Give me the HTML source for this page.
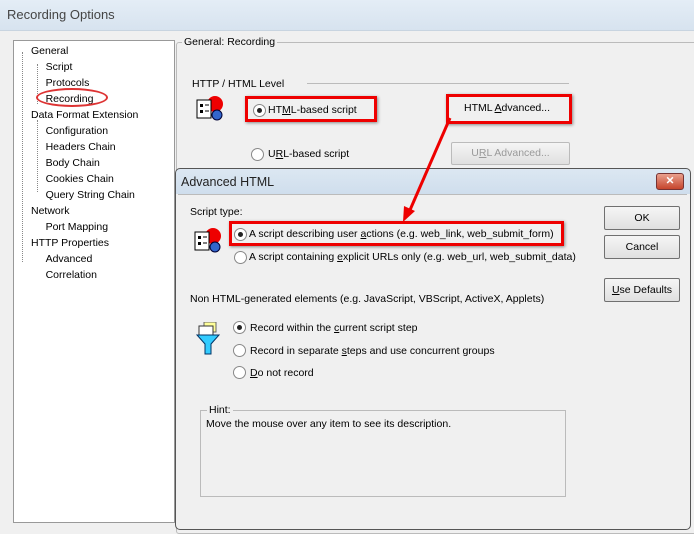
<!DOCTYPE html><html><head><style>
body{margin:0;width:694px;height:521px;overflow:hidden;background:#f0f0f0;font-family:"Liberation Sans",Tahoma,sans-serif;font-size:10.5px;color:#000;position:relative}
.a{position:absolute;white-space:nowrap}
.rad{position:absolute;width:11px;height:11px;border-radius:50%;border:1px solid #888;background:#fff}
.rad.on::after{content:"";position:absolute;left:3px;top:3px;width:5px;height:5px;border-radius:50%;background:#222}
.btn{position:absolute;border:1px solid #707070;background:linear-gradient(#f5f5f5,#e0e0e0);text-align:center;border-radius:2px}
.red{position:absolute;border:3px solid #e00;box-shadow:1px 1px 3px #888}
</style></head><body>
<div class="a" style="left:0;top:0;width:694px;height:30px;background:linear-gradient(#e4edf6,#d7e3ef);border-bottom:1px solid #c8d4e0"></div>
<div class="a" style="left:7px;top:7px;font-size:13px;color:#444">Recording Options</div>
<div class="a" style="left:13px;top:40px;width:160px;height:481px;background:#fff;border:1px solid #999"></div>
<div class="a" style="left:22px;top:52px;height:210px;border-left:1px dotted #888"></div>
<div class="a" style="left:37px;top:64px;height:40px;border-left:1px dotted #888"></div>
<div class="a" style="left:37px;top:120px;height:72px;border-left:1px dotted #888"></div>
<div class="a" style="left:31px;top:43px;line-height:16px">General<br>&nbsp;&nbsp;&nbsp;&nbsp;&nbsp;Script<br>&nbsp;&nbsp;&nbsp;&nbsp;&nbsp;Protocols<br>&nbsp;&nbsp;&nbsp;&nbsp;&nbsp;Recording<br>Data Format Extension<br>&nbsp;&nbsp;&nbsp;&nbsp;&nbsp;Configuration<br>&nbsp;&nbsp;&nbsp;&nbsp;&nbsp;Headers Chain<br>&nbsp;&nbsp;&nbsp;&nbsp;&nbsp;Body Chain<br>&nbsp;&nbsp;&nbsp;&nbsp;&nbsp;Cookies Chain<br>&nbsp;&nbsp;&nbsp;&nbsp;&nbsp;Query String Chain<br>Network<br>&nbsp;&nbsp;&nbsp;&nbsp;&nbsp;Port Mapping<br>HTTP Properties<br>&nbsp;&nbsp;&nbsp;&nbsp;&nbsp;Advanced<br>&nbsp;&nbsp;&nbsp;&nbsp;&nbsp;Correlation</div>
<div class="a" style="left:36px;top:88px;width:68px;height:15px;border:2px solid #d33;border-radius:50%"></div>
<div class="a" style="left:176px;top:42px;width:530px;height:490px;border:1px solid #bbb;border-radius:3px"></div>
<div class="a" style="left:182px;top:36px;background:#f0f0f0;padding:0 2px">General: Recording</div>
<div class="a" style="left:192px;top:78px">HTTP / HTML Level</div>
<div class="a" style="left:307px;top:83px;width:262px;border-top:1px solid #bbb"></div>
<svg class="a" style="left:195px;top:94px" width="32" height="32"><circle cx="20" cy="10" r="8" fill="#e00"/><rect x="2" y="6" width="14" height="18" fill="#fff" stroke="#000"/><rect x="5" y="10" width="3" height="3" fill="#000"/><rect x="5" y="16" width="3" height="3" fill="#000"/><line x1="10" y1="11" x2="14" y2="11" stroke="#000"/><line x1="10" y1="17" x2="14" y2="17" stroke="#000"/><circle cx="22" cy="21" r="5" fill="#36c" stroke="#003"/></svg>
<div class="red" style="left:245px;top:96px;width:126px;height:20px"></div>
<div class="rad on" style="left:253px;top:104px"></div>
<div class="a" style="left:268px;top:104px">HT<u>M</u>L-based script</div>
<div class="red" style="left:446px;top:94px;width:120px;height:24px"></div>
<div class="a" style="left:464px;top:102px">HTML <u>A</u>dvanced...</div>
<div class="rad" style="left:251px;top:148px"></div>
<div class="a" style="left:268px;top:148px">U<u>R</u>L-based script</div>
<div class="btn" style="left:451px;top:142px;width:117px;height:21px;line-height:21px;color:#999;border-color:#bbb">U<u>R</u>L Advanced...</div>
<div class="a" style="left:175px;top:168px;width:514px;height:360px;border:1px solid #555;border-radius:5px;background:linear-gradient(#dce7f2,#cfdeed 25px,#f0f0f0 25px)"></div>
<div class="a" style="left:181px;top:175px;font-size:12.5px;color:#222">Advanced HTML</div>
<div class="a" style="left:656px;top:173px;width:26px;height:15px;background:linear-gradient(#e9a08e,#c6452c);border:1px solid #733;border-radius:3px;color:#fff;text-align:center;font-weight:bold;line-height:15px">✕</div>
<div class="a" style="left:178px;top:194px;width:509px;height:330px;background:#f0f0f0;border-top:1px solid #bbb"></div>
<div class="a" style="left:190px;top:206px">Script type:</div>
<svg class="a" style="left:193px;top:226px" width="32" height="32"><circle cx="20" cy="10" r="8" fill="#e00"/><rect x="2" y="6" width="14" height="18" fill="#fff" stroke="#000"/><rect x="5" y="10" width="3" height="3" fill="#000"/><rect x="5" y="16" width="3" height="3" fill="#000"/><line x1="10" y1="11" x2="14" y2="11" stroke="#000"/><line x1="10" y1="17" x2="14" y2="17" stroke="#000"/><circle cx="22" cy="21" r="5" fill="#36c" stroke="#003"/></svg>
<div class="red" style="left:229px;top:221px;width:329px;height:19px"></div>
<div class="rad on" style="left:234px;top:228px"></div>
<div class="a" style="left:249px;top:228px">A script describing user <u>a</u>ctions (e.g. web_link, web_submit_form)</div>
<div class="rad" style="left:234px;top:251px"></div>
<div class="a" style="left:249px;top:251px">A script containing <u>e</u>xplicit URLs only (e.g. web_url, web_submit_data)</div>
<div class="btn" style="left:604px;top:206px;width:74px;height:22px;line-height:22px">OK</div>
<div class="btn" style="left:604px;top:235px;width:74px;height:22px;line-height:22px">Cancel</div>
<div class="btn" style="left:604px;top:278px;width:74px;height:22px;line-height:22px"><u>U</u>se Defaults</div>
<div class="a" style="left:190px;top:293px">Non HTML-generated elements (e.g. JavaScript, VBScript, ActiveX, Applets)</div>
<svg class="a" style="left:196px;top:322px" width="26" height="34"><rect x="8" y="0" width="12" height="10" fill="#ff9" stroke="#666"/><rect x="3" y="4" width="14" height="9" fill="#fff" stroke="#333"/><path d="M1 13h22l-8 9v10h-6v-10z" fill="#3cf" stroke="#036"/></svg>
<div class="rad on" style="left:233px;top:321px"></div>
<div class="a" style="left:250px;top:322px">Record within the <u>c</u>urrent script step</div>
<div class="rad" style="left:233px;top:344px"></div>
<div class="a" style="left:250px;top:345px">Record in separate <u>s</u>teps and use concurrent groups</div>
<div class="rad" style="left:233px;top:366px"></div>
<div class="a" style="left:250px;top:367px"><u>D</u>o not record</div>
<div class="a" style="left:200px;top:410px;width:364px;height:85px;border:1px solid #bbb"></div>
<div class="a" style="left:207px;top:404px;background:#f0f0f0;padding:0 2px">Hint:</div>
<div class="a" style="left:206px;top:418px">Move the mouse over any item to see its description.</div>
<svg class="a" style="left:0;top:0" width="694" height="521"><line x1="450" y1="118" x2="410" y2="210" stroke="#e00" stroke-width="3"/><path d="M403 222l1-16 11 5z" fill="#e00"/></svg>
</body></html>
